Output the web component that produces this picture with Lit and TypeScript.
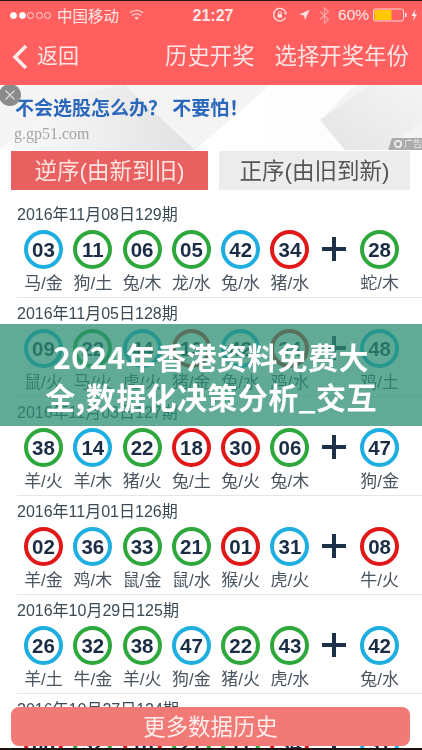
import { LitElement, html, css, svg } from "lit";
import { customElement } from "lit/decorators.js";

type Ball = [string, "b" | "g" | "r", string];
interface Draw { date: string; balls: Ball[]; }

const draws: Draw[] = [
  { date: "2016年11月08日129期", balls: [["03","b","马/金"],["11","g","狗/土"],["06","g","兔/木"],["05","g","龙/水"],["42","b","兔/水"],["34","r","猪/水"],["28","g","蛇/木"]] },
  { date: "2016年11月05日128期", balls: [["09","b","鼠/火"],["22","g","马/火"],["44","b","虎/火"],["13","r","猪/金"],["42","b","兔/水"],["34","r","鸡/水"],["48","b","鸡/土"]] },
  { date: "2016年11月03日127期", balls: [["38","g","羊/火"],["14","b","羊/木"],["22","g","猪/火"],["18","r","兔/土"],["30","r","兔/火"],["06","g","兔/木"],["47","b","狗/金"]] },
  { date: "2016年11月01日126期", balls: [["02","r","羊/金"],["36","b","鸡/木"],["33","g","鼠/金"],["21","g","鼠/水"],["01","r","猴/火"],["31","b","虎/火"],["08","r","牛/火"]] },
  { date: "2016年10月29日125期", balls: [["26","b","羊/土"],["32","g","牛/金"],["38","g","羊/火"],["47","b","狗/金"],["22","g","猪/火"],["43","g","虎/水"],["42","b","兔/水"]] },
  { date: "2016年10月27日124期", balls: [["08","r","羊/金"],["32","g","牛/金"],["18","r","兔/土"],["27","g","狗/金"],["11","g","狗/土"],["34","r","猪/水"],["31","b","虎/火"]] },
];

@customElement("app-root")
export class AppRoot extends LitElement {
  static styles = css`
    :host {
      display: block;
      position: relative;
      width: 422px;
      height: 750px;
      overflow: hidden;
      background: #fff;
      font-family: "Liberation Sans", "Noto Sans CJK SC", sans-serif;
    }
    .screen { height: 750px; overflow: hidden; filter: blur(0.45px); }
    .head { background: #ff5f5f; height: 85px; border-top: 1px solid #2a1414; box-sizing: border-box; color: #ffe6e4; }
    .status { display: flex; align-items: center; height: 28px; padding-left: 10px; font-size: 15.5px; }
    .dots { display: flex; gap: 1.5px; margin-right: 6px; }
    .dot { width: 7px; height: 7px; border-radius: 50%; box-sizing: border-box; border: 1px solid #ffd9d6; }
    .dot.on { background: #fff; border-color: #fff; }
    .wifi { margin-left: 10px; width: 15px; }
    .time { font-weight: 700; font-size: 16px; margin-left: 48px; width: 42px; text-align: center; padding-top: 1px; }
    .right { display: flex; align-items: center; margin-left: 38px; }
    .pct { font-size: 15.5px; margin: 0 4px 0 8px; }
    .nav { display: flex; align-items: center; height: 50px; padding: 0 0 5px 12px; font-size: 22.4px; }
    .chev { margin-top: 5px; }
    .back { font-size: 21px; margin-left: 9px; }
    .title { margin-left: 86px; }
    .choose { margin-left: 20px; }
    .ad { position: relative; height: 65px; background: #f4f4f4; overflow: hidden; padding: 14px 0 0 15px; box-sizing: border-box; }
    .ad svg.bg { position: absolute; inset: 0; }
    .ad-title { position: relative; color: #2b67bb; font-weight: 700; font-size: 19px; line-height: 19px; }
    .ad-url { position: relative; color: #a6a6a6; font-family: "Liberation Serif", serif; font-size: 16px; line-height: 20px; margin: 6px 0 0 -1px; }
    .close { position: absolute; left: -1px; top: -1px; width: 22px; height: 22px; border-radius: 50%; background: #8b8b8b; display: grid; place-items: center; }
    .tag { position: absolute; right: 0; bottom: 0; width: 34px; height: 12px; background: #ababab; clip-path: polygon(4px 0, 100% 0, 100% 100%, 0 100%); color: #eee; font-size: 9px; line-height: 12px; display: flex; align-items: center; justify-content: flex-end; gap: 1px; }
    .tabs { display: grid; grid-template-columns: 197px 191px; gap: 11px; padding: 1px 0 0 11px; }
    .tab { height: 39px; box-sizing: border-box; padding-bottom: 3px; display: grid; place-items: center; font-size: 22.5px; background: #ececec; color: #555; }
    .tab.on { background: #e8605f; color: #ffe4e2; }
    .list { padding: 9px 0 0 17px; }
    .row { height: 99px; box-sizing: border-box; border-bottom: 1px solid #e6e6e6; }
    .date { height: 30px; line-height: 31px; font-size: 16px; color: #3b4a55; }
    .balls { display: grid; grid-template-columns: repeat(6, 39px) 30px 39px; column-gap: 10.3px; padding-left: 7px; }
    .cell { display: flex; flex-direction: column; align-items: center; width: 39px; }
    .ball { width: 39px; height: 39px; border-radius: 50%; border: 4px solid; box-sizing: border-box; display: grid; place-items: center; font-weight: 700; font-size: 20.5px; color: #1b2d45; background: #fff; margin-top: 1px; }
    .ball.b { border-color: #1eaee0; }
    .ball.g { border-color: #2ea83c; }
    .ball.r { border-color: #e01818; }
    .label { font-size: 17px; line-height: 24px; margin-top: 3px; color: #4a5560; white-space: nowrap; }
    .plus { width: 24px; height: 24px; margin: 8px 0 0 2px; }
    .bar-bottom { position: absolute; left: 0; right: 0; bottom: 0; height: 2px; background: #1c1010; }
    .more { position: absolute; left: 11px; top: 707px; width: 399px; height: 39px; box-sizing: border-box; padding-bottom: 3px; border-radius: 8px; background: #f27a76; color: #ffeeec; font-size: 22.4px; display: grid; place-items: center; filter: blur(0.4px); }
    .banner { position: absolute; left: 0; right: 0; top: 324px; height: 102px; background: rgba(43, 142, 115, 0.75); color: #fff; font-family: "Noto Sans CJK SC", sans-serif; font-weight: 700; font-size: 30px; letter-spacing: 0.4px; line-height: 40px; text-align: center; padding: 12px 42px 0; box-sizing: border-box; overflow: hidden; }
  `;

  private statusIcons() {
    return html`
      <svg width="16" height="16" viewBox="0 0 16 16" fill="none" stroke="#ffe6e4" stroke-width="1.3">
        <path d="M13.5 10.5A6.3 6.3 0 1 1 13.6 5" /><path d="M14.8 5.5l-1.2 1.4-1.3-1.3" />
        <rect x="5.6" y="7.2" width="4.4" height="3.4" fill="#ffe6e4" stroke="none" />
        <path d="M6.4 7.2V6a1.4 1.4 0 0 1 2.8 0v1.2" stroke-width="1" />
      </svg>
      <svg width="11" height="12" viewBox="0 0 11 12" style="margin-left:11px"><path d="M10.5 .8 6 11 5 6.4.5 5.6Z" fill="#ffe6e4" /></svg>
      <svg width="11" height="17" viewBox="0 0 11 17" fill="none" stroke="#f7a5a2" stroke-width="1.3" style="margin-left:9px"><path d="M1 4.5l8.5 8L5.5 16V1l4 3.500L1 12.500" /></svg>
      <span class="pct">60%</span>
      <svg width="45" height="14" viewBox="0 0 45 14">
        <rect x=".5" y="1" width="30" height="12" rx="2" fill="none" stroke="#ffd9d6" />
        <rect x="1.500" y="2" width="17" height="10" fill="#ffc800" />
        <rect x="32" y="5" width="1.600" height="4" fill="#ffe6e4" />
        <path d="M42.500 .8 38.500 8h2.500l-1 5.200L44 6h-2.500Z" fill="#ffe6e4" />
      </svg>`;
  }

  private adBackground() {
    return svg`
      <defs>
        <linearGradient id="l" x1="0" x2="1" y1="0" y2="0"><stop offset="0" stop-color="#fbfbfb"/><stop offset="1" stop-color="#e2e2e2"/></linearGradient>
        <linearGradient id="r" x1="0" x2="1" y1="1" y2="0"><stop offset="0" stop-color="#e4e4e4"/><stop offset="1" stop-color="#f4f4f4"/></linearGradient>
      </defs>
      <polygon points="0,65 70,10 125,0 195,65" fill="url(#l)" />
      <polygon points="195,65 270,0 345,65" fill="#fff" />
      <polygon points="270,0 355,0 320,35 345,65 270,65" fill="#fdfdfd" />
      <polygon points="320,35 370,0 422,0 422,35 385,65 345,65" fill="url(#r)" />`;
  }

  private renderRow(d: Draw) {
    const cell = (b: Ball) => html`<div class="cell"><div class="ball ${b[1]}">${b[0]}</div><div class="label">${b[2]}</div></div>`;
    return html`
      <div class="row">
        <div class="date">${d.date}</div>
        <div class="balls">
          ${d.balls.slice(0, 6).map(cell)}
          <svg class="plus" viewBox="0 0 24 24"><path d="M0 12h24M12 0v24" stroke="#1c3048" stroke-width="4" /></svg>
          ${cell(d.balls[6])}
        </div>
      </div>`;
  }

  render() {
    return html`
      <div class="screen">
        <div class="head">
          <div class="status">
            <div class="dots">${[1, 1, 0, 0, 0].map((on) => html`<span class="dot ${on ? "on" : ""}"></span>`)}</div>
            <span>中国移动</span>
            <svg class="wifi" width="15" height="12" viewBox="0 0 15 12" fill="none" stroke="#ffc9c6" stroke-width="1.400">
              <path d="M.8 4a10 10 0 0 1 13.400 0M3 6.600a6.600 6.600 0 0 1 9 0" /><path d="M7.500 11 5.300 8.800a3.200 3.200 0 0 1 4.400 0Z" fill="#ffc9c6" stroke="none" />
            </svg>
            <span class="time">21:27</span>
            <div class="right">${this.statusIcons()}</div>
          </div>
          <div class="nav">
            <svg class="chev" width="16" height="26" viewBox="0 0 16 26" fill="none" stroke="#ffece9" stroke-width="3.600"><path d="M14 2 3 13l11 11" /></svg>
            <span class="back">返回</span>
            <span class="title">历史开奖</span>
            <span class="choose">选择开奖年份</span>
          </div>
        </div>
        <div class="ad">
          <svg class="bg" width="422" height="65" viewBox="0 0 422 65">${this.adBackground()}</svg>
          <div class="ad-title">不会选股怎么办？ 不要怕！</div>
          <div class="ad-url">g.gp51.com</div>
          <div class="close"><svg width="12" height="12" viewBox="0 0 12 12"><path d="M1.500 1.500l9 9M10.500 1.500l-9 9" stroke="#ddd" stroke-width="1.200" /></svg></div>
          <div class="tag"><svg width="10" height="10" viewBox="0 0 10 10"><circle cx="5" cy="5" r="3.200" fill="none" stroke="#eee" stroke-width="1.800" /></svg><span>广告</span></div>
        </div>
        <div class="tabs">
          <div class="tab on">逆序(由新到旧)</div>
          <div class="tab">正序(由旧到新)</div>
        </div>
        <div class="list">${draws.map((d) => this.renderRow(d))}</div>
      </div>
      <div class="bar-bottom"></div>
      <div class="more">更多数据历史</div>
      <div class="banner">2024年香港资料免费大全,数据化决策分析_交互</div>
    `;
  }
}
